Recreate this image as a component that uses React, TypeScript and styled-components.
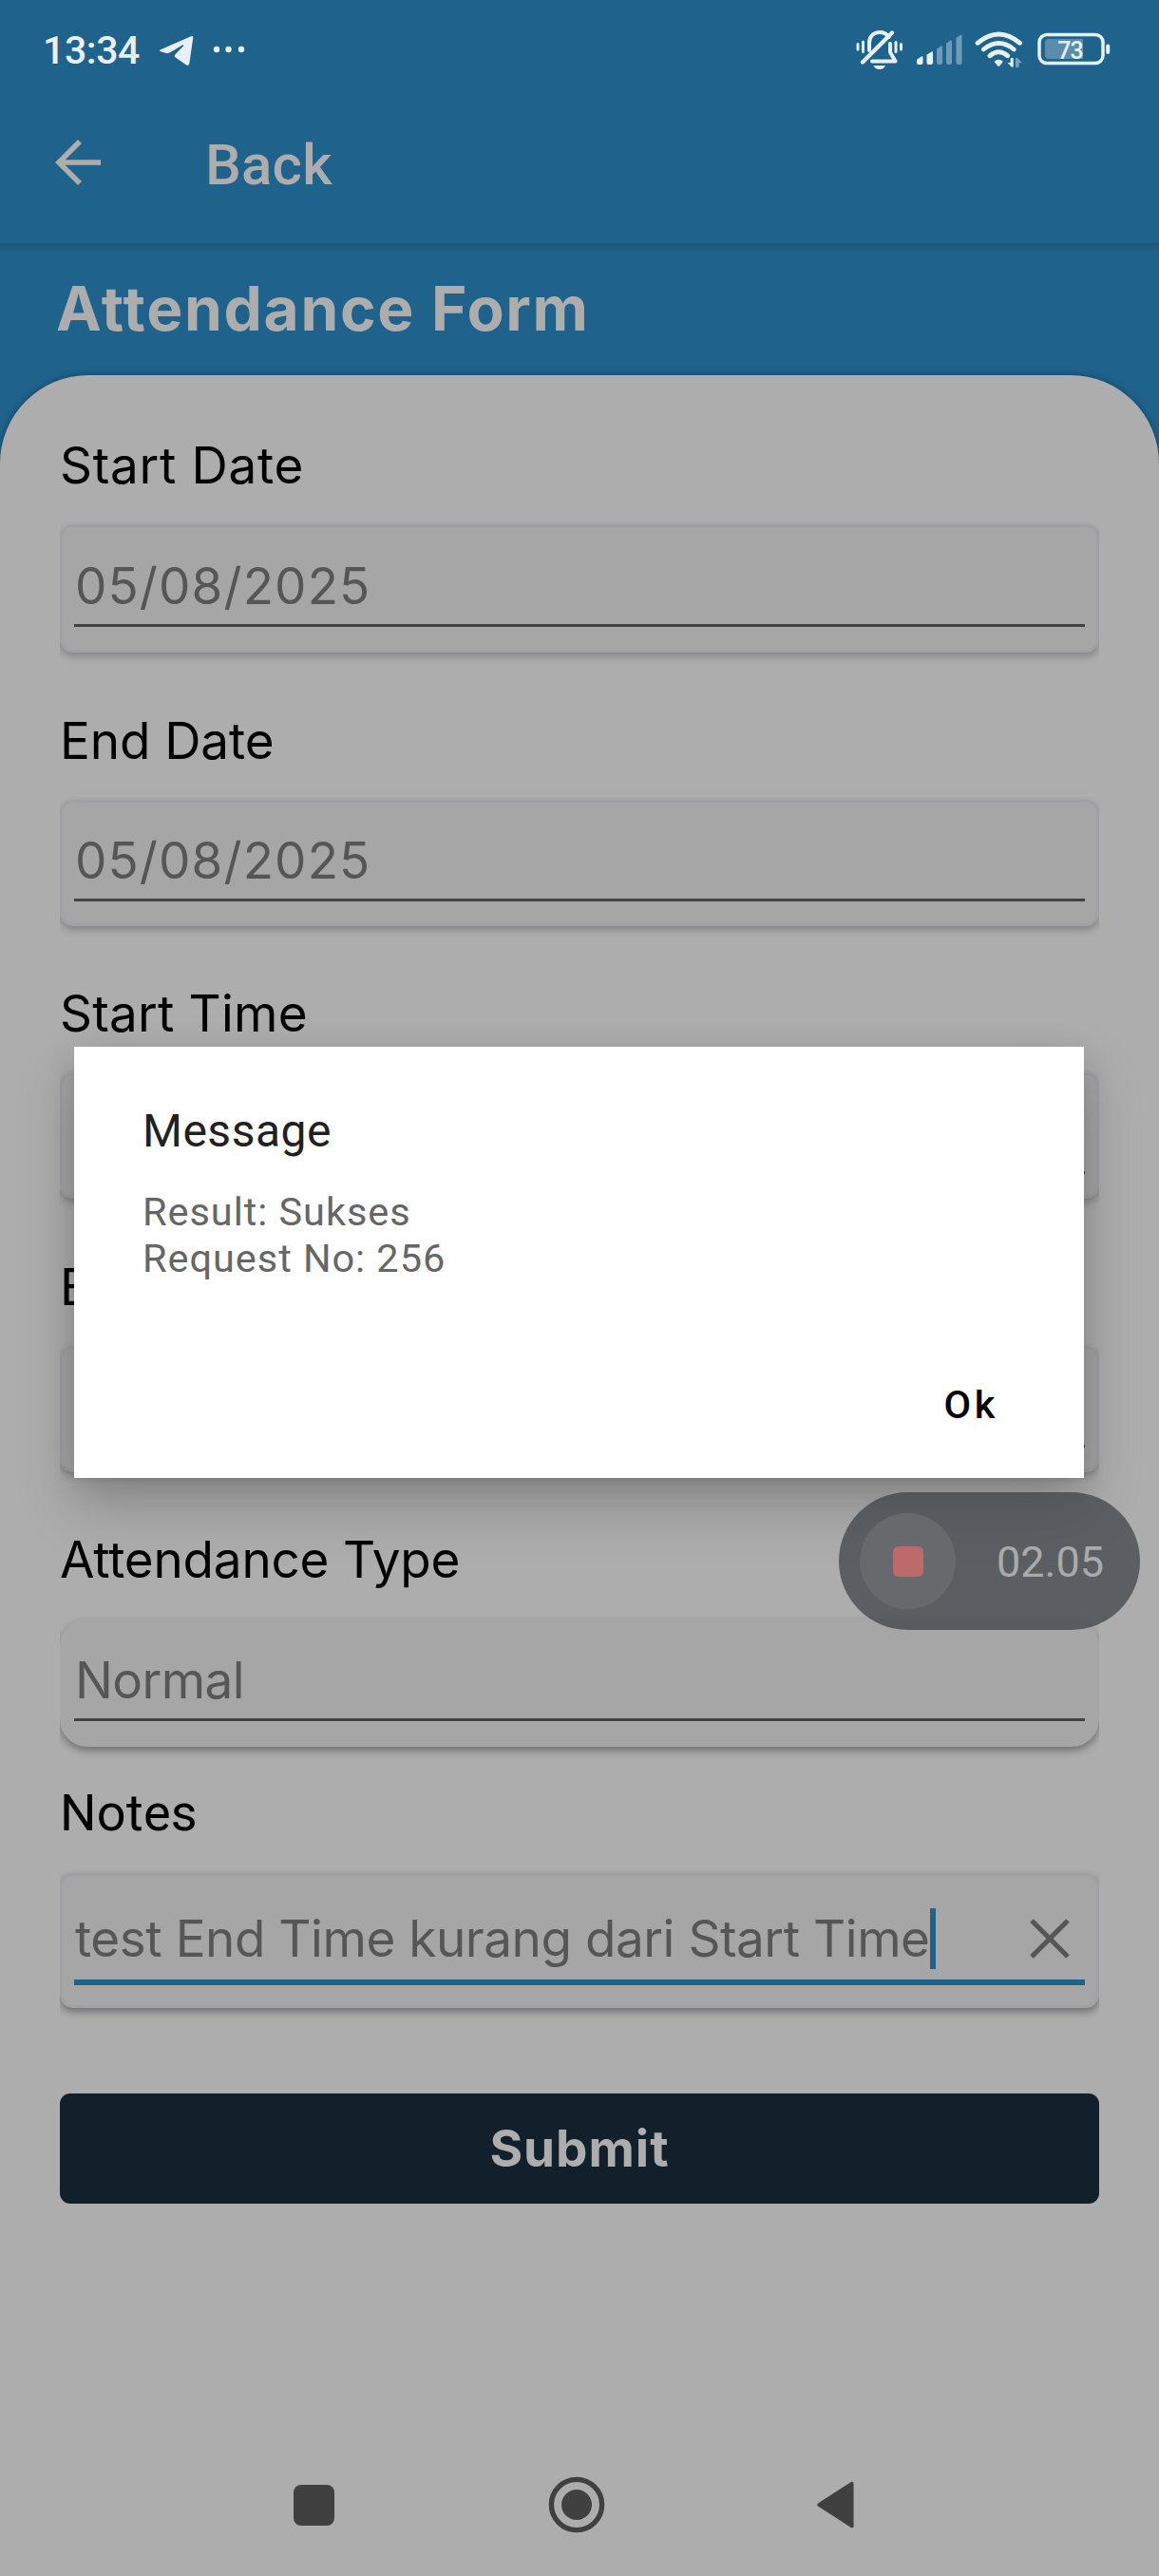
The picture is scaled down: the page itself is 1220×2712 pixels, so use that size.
import React from 'react';
import styled, { createGlobalStyle } from 'styled-components';

const BLUE = '#1f628c';
const SURFACE = '#adadad';
const ICON = '#e6f0f6';
const FORM_FONT = 'Inter, Roboto, "Liberation Sans", sans-serif';

const GlobalStyle = createGlobalStyle`
  * { box-sizing: border-box; }
  html, body { margin: 0; padding: 0; background: ${SURFACE}; }
  body { font-family: Roboto, "Liberation Sans", sans-serif; }
`;

const Screen = styled.div`
  position: relative;
  display: flex;
  flex-direction: column;
  width: 1220px;
  height: 2712px;
  overflow: hidden;
  background: ${SURFACE};
`;

const Header = styled.header`
  display: flex;
  flex: none;
  flex-direction: column;
  height: 256px;
  background: ${BLUE};
`;

const StatusBar = styled.div`
  display: flex;
  align-items: center;
  justify-content: space-between;
  height: 106px;
  padding: 0 51px 0 45px;
`;

const StatusGroup = styled.div`
  display: flex;
  align-items: center;
`;

const Clock = styled.span`
  width: 121px;
  font-size: 41px;
  font-weight: 500;
  line-height: 50px;
  letter-spacing: -0.4px;
  color: ${ICON};
`;

const AppBar = styled.div`
  display: flex;
  align-items: center;
  height: 134px;
  padding-left: 56px;
`;

const BarTitle = styled.h1`
  margin: 2px 0 0 104px;
  font-size: 60px;
  font-weight: 500;
  line-height: 72px;
  letter-spacing: 0.2px;
  color: ${SURFACE};
`;

const Body = styled.main`
  display: flex;
  flex: none;
  flex-direction: column;
  background:
    linear-gradient(rgba(0, 0, 0, 0.12), rgba(0, 0, 0, 0)) 0 0 / 100% 9px no-repeat,
    linear-gradient(${BLUE} 0 300px, ${SURFACE} 300px);
`;

const PageTitle = styled.h2`
  height: 139px;
  margin: 0;
  padding: 28px 0 0 59px;
  font-family: ${FORM_FONT};
  font-size: 64px;
  font-weight: 700;
  line-height: 82px;
  letter-spacing: 1.7px;
  color: ${SURFACE};
`;

const Sheet = styled.section`
  display: flex;
  flex-direction: column;
  height: 2330px;
  padding: 63px 63px 0;
  border-radius: 93px 93px 0 0;
  background: ${SURFACE};
  box-shadow: 0 0 7px rgba(0, 0, 0, 0.35);
`;

const FieldGroup = styled.div<{ $gap: number }>`
  display: flex;
  flex-direction: column;
  gap: 30px;
  margin-top: ${(p) => p.$gap}px;
`;

const Label = styled.label<{ $plain?: boolean; $spacing?: number }>`
  height: 64px;
  font-family: ${(p) => (p.$plain ? 'Roboto, sans-serif' : FORM_FONT)};
  font-size: ${(p) => (p.$plain ? 54 : 53)}px;
  font-weight: 400;
  line-height: ${(p) => (p.$plain ? 62 : 64)}px;
  letter-spacing: ${(p) => p.$spacing ?? 0}px;
  white-space: nowrap;
  color: #000;
`;

const FieldBox = styled.div<{ $height: number; $rounded?: boolean; $focused?: boolean }>`
  display: flex;
  flex-direction: column;
  justify-content: flex-end;
  height: ${(p) => p.$height}px;
  padding: 0 12px ${(p) => (p.$focused ? 21 : p.$height === 133 ? 23 : 24)}px;
  border: 3px solid ${(p) => (p.$rounded ? '#a6a6a6' : '#a0a0a7')};
  border-radius: ${(p) => (p.$rounded ? 29 : 14)}px;
  background: #a6a6a6;
  box-shadow: 0 4px 8px rgba(0, 0, 0, ${(p) => (p.$rounded || p.$focused ? 0.36 : 0.24)});
  clip-path: inset(-3px 0 -20px 0);
`;

const FieldLine = styled.div<{ $focused?: boolean }>`
  display: flex;
  align-items: center;
  padding: 0 15px ${(p) => (p.$focused ? 11 : 8)}px 1px;
  border-bottom: ${(p) => (p.$focused ? `6px solid ${BLUE}` : '3px solid #434343')};
`;

const Value = styled.span<{ $spacing?: number }>`
  font-family: ${FORM_FONT};
  font-size: 53px;
  line-height: 64px;
  font-weight: 400;
  letter-spacing: ${(p) => p.$spacing ?? 0}px;
  white-space: nowrap;
  color: #565656;
`;

const Caret = styled.span`
  width: 6px;
  height: 64px;
  background: ${BLUE};
`;

const ClearButton = styled.button`
  display: flex;
  margin: 0 0 0 auto;
  padding: 0;
  border: 0;
  background: none;
`;

const SubmitButton = styled.button`
  height: 116px;
  margin-top: 90px;
  padding: 0;
  border: 0;
  border-radius: 11px;
  background: #12202c;
  color: ${SURFACE};
  font-family: ${FORM_FONT};
  font-size: 53px;
  font-weight: 700;
  letter-spacing: 1px;
`;

const NavBar = styled.nav`
  position: absolute;
  left: 0;
  bottom: 0;
  display: flex;
  align-items: center;
  width: 100%;
  height: 150px;
  padding-left: 309px;
`;

const NavButton = styled.span<{ $after: number }>`
  display: flex;
  margin-right: ${(p) => p.$after}px;
`;

const Dialog = styled.div`
  position: absolute;
  left: 78px;
  top: 1102px;
  display: flex;
  flex-direction: column;
  width: 1063px;
  height: 454px;
  padding: 61px 90px 0 72px;
  background: #fff;
  box-shadow: 0 28px 60px rgba(0, 0, 0, 0.2), 0 10px 28px rgba(0, 0, 0, 0.1);
`;

const DialogTitle = styled.h3`
  margin: 0;
  font-size: 48px;
  font-weight: 400;
  line-height: 56px;
  letter-spacing: 0.5px;
  color: #212121;
`;

const DialogText = styled.p`
  margin: 32px 0 0;
  font-size: 41.5px;
  line-height: 49px;
  letter-spacing: 0.95px;
  white-space: pre-line;
  color: #666;
`;

const DialogAction = styled.button`
  align-self: flex-end;
  margin-top: 105px;
  padding: 0;
  border: 0;
  background: none;
  color: #000;
  font-family: inherit;
  font-size: 41.5px;
  font-weight: 500;
  line-height: 50px;
  letter-spacing: 3.6px;
`;

const Recorder = styled.div`
  position: absolute;
  left: 883px;
  top: 1571px;
  display: flex;
  align-items: center;
  width: 317px;
  height: 145px;
  padding-left: 22px;
  border-radius: 73px;
  background: rgba(56, 61, 69, 0.7);
`;

const StopButton = styled.span`
  display: flex;
  align-items: center;
  justify-content: center;
  width: 101px;
  height: 101px;
  border-radius: 50%;
  background: #666a6d;
`;

const StopMark = styled.span`
  width: 32px;
  height: 32px;
  border-radius: 6px;
  background: #bc6a6a;
`;

const RecorderTime = styled.span`
  margin: 2px 0 0 43px;
  font-size: 45px;
  line-height: 54px;
  color: #a8aaac;
`;

const TelegramIcon = () => (
  <svg width="38" height="34" viewBox="0 0 38 34" fill={ICON}>
    <path d="M3 16.2 35.6 2.1q1.9-.6 1.7 1.5L33.4 30.400q-.6 3.600-3.600 1.900L18.500 24.300q-1.600-1.200-.2-2.800L27.200 12.300q.5-1.500-1.200-.8L13 19.300q-1.800 1-4 .6L3 18.300q-2-1 0-2.100z" />
  </svg>
);

const DotsSvg = styled.svg`
  margin: -2px 0 0 20px;
`;

const MoreDots = () => (
  <DotsSvg width="34" height="8" viewBox="0 0 34 8" fill={ICON}>
    <circle cx="4" cy="4" r="3.2" />
    <circle cx="16.500" cy="4" r="3.2" />
    <circle cx="30" cy="4" r="3.2" />
  </DotsSvg>
);

const StatusIcons = () => (
  <svg width="268" height="44" viewBox="901 30 268 44">
    <g fill="none" stroke={ICON} strokeWidth="3.400" strokeLinecap="round">
      <path d="M903 45.500v5.500M908.500 43v10.500M943 43.500v10M948.500 45.500v5.500" strokeWidth="3" />
      <path d="M915 52V44.500C915 37 920 33 926 33c4 0 7.500 1.800 9.500 5M937 45v9l5.500 9.500H918" strokeWidth="4" strokeLinejoin="round" />
      <path d="M939 33.500 908 64.500" strokeWidth="4.400" />
    </g>
    <path d="M919.500 68h12.500q-1.500 4-6.200 4t-6.300-4z" fill={ICON} />
    <g fill={ICON}>
      <path d="M965 62.500q0-1 1-1.600l4-2.400q1.500-.6 1.500 1V65q0 2-2 2H967q-2 0-2-2z" />
      <path d="M975.500 56.700l5-3.300q1.500-.6 1.500 1V65q0 2-2 2h-2.500q-2 0-2-2z" />
      <g opacity="0.4">
        <path d="M986 50.500l4.500-3.100q1.500-.6 1.500 1V65q0 2-2 2h-2q-2 0-2-2z" />
        <path d="M996 44.800l4.500-3.200q1.500-.6 1.500 1V65q0 2-2 2h-2q-2 0-2-2z" />
        <path d="M1006.500 39l4.500-3.200q1.500-.6 1.500 1V65q0 2-2 2h-2q-2 0-2-2z" />
      </g>
    </g>
    <g fill="none" stroke={ICON} strokeWidth="4.800" strokeLinecap="round">
      <path d="M1029 44.300q22.300-18.800 44.600 0" />
      <path d="M1035.300 51q16-13 32 0" />
      <path d="M1041.800 57.800q9.500-8 19 0" />
    </g>
    <path d="M1046.500 63.800q4.700-4 9.400 0l-3.500 4.400q-1.200 1-2.400 0z" fill={ICON} />
    <path d="M1060.500 65h3.200v-5h3v9.500h-2z" fill={ICON} />
    <path d="M1069 69.800V60h2l5 5.200h-3.400v4.600z" fill={ICON} opacity="0.45" />
    <rect x="1094" y="35.500" width="67" height="30" rx="8" fill="none" stroke={ICON} strokeWidth="3.500" />
    <path d="M1104 40h36v21h-36q-4 0-4-4v-13q0-4 4-4z" fill={ICON} opacity="0.3" />
    <rect x="1164.200" y="45.500" width="4" height="10.500" rx="2" fill={ICON} />
    <text x="1126.500" y="60.800" textAnchor="middle" fontSize="25" fontWeight="500" fontFamily="Roboto, sans-serif" letterSpacing="-1" fill={ICON}>73</text>
  </svg>
);

const BackSvg = styled.svg`
  margin-top: -4px;
`;

const BackArrow = () => (
  <BackSvg width="56" height="56" viewBox="0 0 56 56" fill="none" stroke={SURFACE} strokeWidth="5.600">
    <path d="M50 28H6M28 6 6 28l22 22" />
  </BackSvg>
);

const ClearIcon = () => (
  <svg width="44" height="44" viewBox="0 0 44 44" stroke="#565656" strokeWidth="5.200">
    <path d="M3 3l38 38M41 3 3 41" />
  </svg>
);

interface FieldProps {
  label: string;
  value: string;
  gap: number;
  height: number;
  labelSpacing?: number;
  valueSpacing?: number;
  plainLabel?: boolean;
  rounded?: boolean;
  focused?: boolean;
}

const Field = ({ label, value, gap, height, labelSpacing, valueSpacing, plainLabel, rounded, focused }: FieldProps) => (
  <FieldGroup $gap={gap}>
    <Label $plain={plainLabel} $spacing={labelSpacing}>{label}</Label>
    <FieldBox $height={height} $rounded={rounded} $focused={focused}>
      <FieldLine $focused={focused}>
        <Value $spacing={valueSpacing}>{value || '\u00a0'}</Value>
        {focused && <Caret />}
        {focused && <ClearButton aria-label="Clear"><ClearIcon /></ClearButton>}
      </FieldLine>
    </FieldBox>
  </FieldGroup>
);

export default function App() {
  return (
    <Screen>
      <GlobalStyle />
      <Header>
        <StatusBar>
          <StatusGroup>
            <Clock>13:34</Clock>
            <TelegramIcon />
            <MoreDots />
          </StatusGroup>
          <StatusIcons />
        </StatusBar>
        <AppBar>
          <BackArrow />
          <BarTitle>Back</BarTitle>
        </AppBar>
      </Header>
      <Body>
        <PageTitle>Attendance Form</PageTitle>
        <Sheet>
          <Field label="Start Date" value="05/08/2025" gap={0} height={135} labelSpacing={0.7} valueSpacing={1.1} />
          <Field label="End Date" value="05/08/2025" gap={61} height={133} labelSpacing={-0.1} valueSpacing={1.1} />
          <Field label="Start Time" value="" gap={60} height={133} labelSpacing={0.2} />
          <Field label="End Time" value="" gap={61} height={133} />
          <Field label="Attendance Type" value="Normal" gap={60} height={135} labelSpacing={-0.2} valueSpacing={-0.6} rounded />
          <Field
            label="Notes"
            value="test End Time kurang dari Start Time"
            gap={39}
            height={142}
            labelSpacing={0.3}
            valueSpacing={-0.46}
            plainLabel
            focused
          />
          <SubmitButton>Submit</SubmitButton>
        </Sheet>
      </Body>
      <NavBar>
        <NavButton $after={225}>
          <svg width="43" height="43" viewBox="0 0 43 43"><rect width="43" height="43" rx="8" fill="#404040" /></svg>
        </NavButton>
        <NavButton $after={223}>
          <svg width="60" height="60" viewBox="0 0 60 60">
            <circle cx="30" cy="30" r="26.600" fill="none" stroke="#404040" strokeWidth="5.400" />
            <circle cx="30" cy="30" r="16" fill="#404040" />
          </svg>
        </NavButton>
        <NavButton $after={0}>
          <svg width="40" height="50" viewBox="0 0 40 50">
            <path d="M36.800 2.500 2 25l34.800 22.500z" fill="#404040" stroke="#404040" strokeWidth="3.500" strokeLinejoin="round" />
          </svg>
        </NavButton>
      </NavBar>
      <Dialog role="dialog">
        <DialogTitle>Message</DialogTitle>
        <DialogText>{'Result: Sukses\nRequest No: 256'}</DialogText>
        <DialogAction>Ok</DialogAction>
      </Dialog>
      <Recorder>
        <StopButton><StopMark /></StopButton>
        <RecorderTime>02.05</RecorderTime>
      </Recorder>
    </Screen>
  );
}
